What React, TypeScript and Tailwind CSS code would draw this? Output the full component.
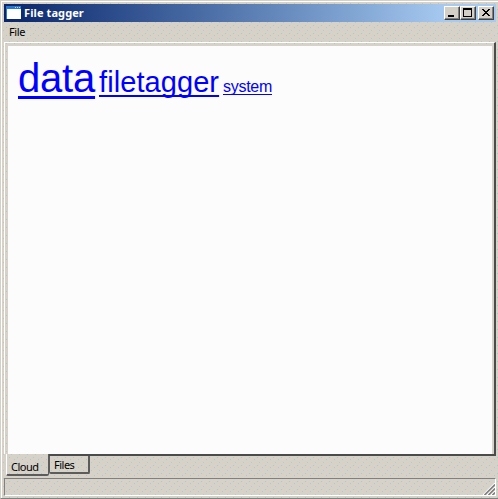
import React from "react";

const dither =
  "bg-[#d5d2ca] bg-[image:conic-gradient(at_1px_1px,transparent_75%,#f0c8b4_0),conic-gradient(at_1px_1px,transparent_75%,#bcc4c2_0),conic-gradient(at_1px_1px,transparent_75%,#c0c6c2_0),conic-gradient(at_1px_1px,transparent_75%,#e8cbb8_0),conic-gradient(at_1px_1px,transparent_75%,#bcc4c2_0)] bg-[length:8px_8px] bg-[position:1px_1px,5px_2px,2px_5px,6px_6px,0px_8px]";

function CaptionButton({ children, label }: { children: React.ReactNode; label: string }) {
  return (
    <button
      aria-label={label}
      className="h-[14px] w-4 border border-t-white border-l-white border-r-[#404040] border-b-[#404040] bg-[#d4d0c8] shadow-[inset_-1px_-1px_0_#808080]"
    >
      <svg width="14" height="12" viewBox="0 0 14 12" shapeRendering="crispEdges" className="block">
        {children}
      </svg>
    </button>
  );
}

const tags = [
  { name: "data", style: "w-[77px] text-[40px] tracking-[-0.2px] decoration-[3px] underline-offset-[4px]" },
  { name: "filetagger", style: "w-[120px] text-[29px] tracking-[0.08px] decoration-[2px] underline-offset-[3px]" },
  { name: "system", style: "w-[49px] text-[16px] tracking-[-0.28px] decoration-[1px] underline-offset-[2px]" },
];

export default function App() {
  return (
    <div className={`flex h-[499px] w-[498px] flex-col overflow-hidden border-t border-b border-l border-t-[#d4d0c8] border-l-[#d4d0c8] border-b-[#808080] font-['Noto_Sans','Open_Sans',sans-serif] text-black ${dither}`}>
      <div className="flex min-h-0 flex-1 flex-col border-t border-l border-white pt-[2px] pr-[2px] pl-[2px]">
        <div className="flex h-[18px] shrink-0 items-center bg-linear-to-r from-[#0a246a] to-[#a6caf0] to-90% pr-[2px] pl-[2px]">
          <svg width="16" height="14" viewBox="0 0 16 14" shapeRendering="crispEdges">
            <rect width="15" height="13" y="0" fill="#2878d0" />
            <rect x="1" y="3" width="14" height="10" fill="white" />
            <rect x="9" y="1" width="1" height="1" fill="#b8dcff" />
            <rect x="11" y="1" width="1" height="1" fill="#b8dcff" />
            <rect x="13" y="1" width="1" height="1" fill="#b8dcff" />
          </svg>
          <span className="ml-[2px] flex-1 text-[11px] leading-[18px] font-bold tracking-[0.1px] text-white">File tagger</span>
          <CaptionButton label="Minimize">
            <rect x="3" y="8" width="6" height="2" fill="black" />
          </CaptionButton>
          <CaptionButton label="Maximize">
            <path d="M2 1h9v9H2zM3 3v6h7V3z" fill="black" fillRule="evenodd" />
          </CaptionButton>
          <span className="w-[2px]" />
          <CaptionButton label="Close">
            <path d="M3 2h2v1h1v1h2V3h1V2h2v1h-1v1H9v1H8v1h1v1h1v1h1v1H9V8H8V7H6v1H5v1H3V8h1V7h1V6h1V5H5V4H4V3H3z" fill="black" />
          </CaptionButton>
        </div>
        <div className="h-[20px] shrink-0 pl-[5px] text-[11px] leading-[20px] tracking-[-0.4px]">File</div>
        <div className="h-[412px] shrink-0 border-t border-r-2 border-l border-t-white border-l-white border-r-[#4b4b4b] pt-[3px] pr-[2px] pl-[3px]">
          <div className="h-[408px] bg-[#fcfcfc] pt-[9px] pl-[10px]">
            <div className="flex items-baseline gap-1 font-['Liberation_Sans',Arial,sans-serif] leading-[46px] text-[#0000ff]">
              {tags.map((t) => (
                <a key={t.name} className={`whitespace-nowrap underline [text-decoration-skip-ink:none] ${t.style}`}>
                  {t.name}
                </a>
              ))}
            </div>
          </div>
        </div>
        <div className="flex h-[24px] shrink-0 items-start pl-[2px] text-[11px] tracking-[-0.5px]">
          <div className="h-[22px] w-[43px] rounded-b-[2px] border-r border-b-2 border-l border-l-white border-r-[#5c5c5c] border-b-[#5c5c5c] pl-1 leading-[25px]">
            Cloud
          </div>
          <div className="flex h-[20px] flex-1 border-t-2 border-[#4b4b4b]">
            <div className="h-[18px] w-[41px] rounded-b-[2px] border-r-2 border-b-2 border-l border-[#5c5c5c] pl-1 leading-[18px]">
              Files
            </div>
          </div>
        </div>
        <div className="flex h-[18px] shrink-0 items-end justify-end border border-t-[#808080] border-l-[#808080] border-r-white border-b-white">
          <svg width="12" height="12" viewBox="0 0 12 12">
            <path d="M0 12L12 0M4 12l8-8M8 12l4-4" stroke="white" strokeWidth="1.2" />
            <path d="M1.5 12L12 1.5M5.5 12L12 5.5M9.5 12L12 9.5" stroke="#808080" strokeWidth="1.6" />
          </svg>
        </div>
      </div>
    </div>
  );
}
